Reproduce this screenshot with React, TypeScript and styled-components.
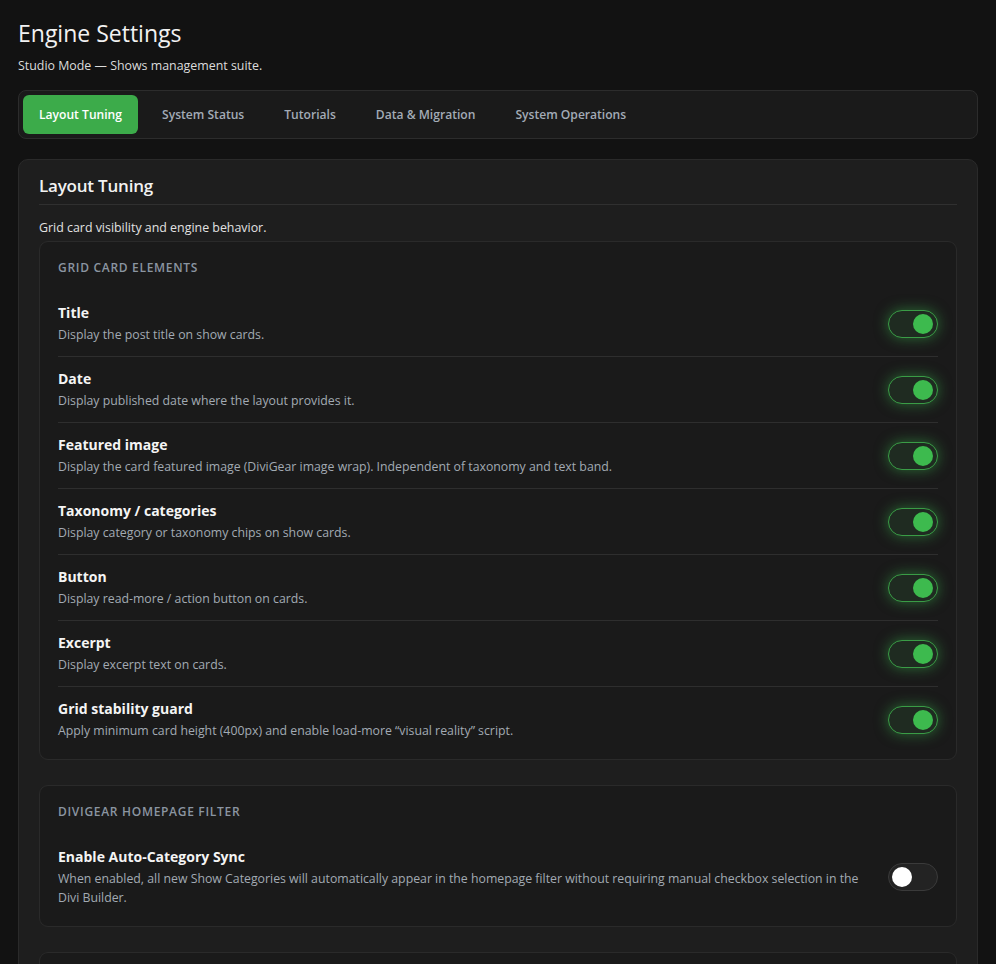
import React from "react";
import styled, { createGlobalStyle } from "styled-components";

const Global = createGlobalStyle`
  html, body { margin: 0; padding: 0; background: #121212; }
  body { font-family: "Open Sans", "Noto Sans", sans-serif; color: #e8e8e8; }
  * { box-sizing: border-box; }
`;

const Page = styled.div`
  padding: 18px 18px 0;
  min-height: 964px;
`;

const Heading = styled.h1`
  margin: 0;
  font-size: 23px;
  line-height: 30px;
  font-weight: 400;
  color: #f2f2f2;
`;

const Subtitle = styled.p`
  margin: 9px 0 15px;
  font-size: 12.4px;
  line-height: 18px;
  color: #dcdcdc;
`;

const TabBar = styled.nav`
  display: flex;
  gap: 8px;
  padding: 4px;
  background: #1a1a1a;
  border: 1px solid #2c2c2c;
  border-radius: 8px;
`;

const Tab = styled.button<{ $active?: boolean }>`
  font-family: inherit;
  font-size: 12.1px;
  font-weight: 600;
  height: 39px;
  padding: 0 16px;
  border: 0;
  border-radius: 6px;
  background: ${(p) => (p.$active ? "#3cab4a" : "transparent")};
  color: ${(p) => (p.$active ? "#ffffff" : "#a3abb6")};
  cursor: pointer;
`;

const MainCard = styled.section`
  margin-top: 20px;
  background: #1e1e1e;
  border: 1px solid #2a2a2a;
  border-radius: 10px;
  padding: 15px 20px 20px;
`;

const CardTitle = styled.h2`
  margin: 0;
  font-size: 17px;
  line-height: 22px;
  font-weight: 600;
  letter-spacing: -0.2px;
  color: #f2f2f2;
  padding-bottom: 7px;
  border-bottom: 1px solid #303030;
`;

const CardDesc = styled.p`
  margin: 14px 0 4px;
  font-size: 12.4px;
  line-height: 18px;
  color: #e2e2e2;
`;

const Section = styled.div`
  background: #1a1a1a;
  border: 1px solid #2a2a2a;
  border-radius: 9px;
  padding: 18px 18px 7px;
  & + & { margin-top: 25px; }
`;

const SectionLabel = styled.h3`
  margin: 0 0 15px;
  font-size: 12px;
  line-height: 16px;
  font-weight: 600;
  letter-spacing: 0.7px;
  text-transform: uppercase;
  color: #8b95a1;
`;

const Row = styled.div`
  display: flex;
  align-items: center;
  gap: 24px;
  padding: 12px 0 12px;
  & + & { border-top: 1px solid #2e2e2e; }
`;

const RowText = styled.div`
  flex: 1;
  min-width: 0;
`;

const RowTitle = styled.div`
  font-size: 14px;
  line-height: 20px;
  font-weight: 700;
  color: #f4f4f4;
`;

const RowDesc = styled.div`
  margin-top: 2px;
  font-size: 12.3px;
  line-height: 19px;
  color: #a2aab3;
`;

const Toggle = styled.span<{ $on?: boolean }>`
  position: relative;
  flex: 0 0 auto;
  width: 50px;
  height: 28px;
  border-radius: 14px;
  border: 1px solid ${(p) => (p.$on ? "#3a9c46" : "#3a3a3a")};
  background: ${(p) => (p.$on ? "#1f2b21" : "#232323")};
  box-shadow: ${(p) => (p.$on ? "0 0 14px rgba(60, 190, 80, 0.5)" : "none")};
  &::after {
    content: "";
    position: absolute;
    top: 3px;
    left: ${(p) => (p.$on ? "24px" : "3px")};
    width: 20px;
    height: 20px;
    border-radius: 50%;
    background: ${(p) => (p.$on ? "#3dba4e" : "#ffffff")};
  }
`;

const Peek = styled.div`
  margin-top: 25px;
  height: 40px;
  background: #1a1a1a;
  border: 1px solid #2a2a2a;
  border-bottom: 0;
  border-radius: 9px 9px 0 0;
`;

const gridItems = [
  { t: "Title", d: "Display the post title on show cards." },
  { t: "Date", d: "Display published date where the layout provides it." },
  { t: "Featured image", d: "Display the card featured image (DiviGear image wrap). Independent of taxonomy and text band." },
  { t: "Taxonomy / categories", d: "Display category or taxonomy chips on show cards." },
  { t: "Button", d: "Display read-more / action button on cards." },
  { t: "Excerpt", d: "Display excerpt text on cards." },
  { t: "Grid stability guard", d: "Apply minimum card height (400px) and enable load-more \u201Cvisual reality\u201D script." },
];

const tabs = ["Layout Tuning", "System Status", "Tutorials", "Data & Migration", "System Operations"];

export default function App() {
  return (
    <>
      <Global />
      <Page>
        <Heading>Engine Settings</Heading>
        <Subtitle>Studio Mode — Shows management suite.</Subtitle>
        <TabBar>
          {tabs.map((t, i) => (
            <Tab key={t} $active={i === 0}>{t}</Tab>
          ))}
        </TabBar>
        <MainCard>
          <CardTitle>Layout Tuning</CardTitle>
          <CardDesc>Grid card visibility and engine behavior.</CardDesc>
          <Section>
            <SectionLabel>Grid card elements</SectionLabel>
            {gridItems.map((it) => (
              <Row key={it.t}>
                <RowText>
                  <RowTitle>{it.t}</RowTitle>
                  <RowDesc>{it.d}</RowDesc>
                </RowText>
                <Toggle $on />
              </Row>
            ))}
          </Section>
          <Section>
            <SectionLabel>DiviGear homepage filter</SectionLabel>
            <Row>
              <RowText>
                <RowTitle>Enable Auto-Category Sync</RowTitle>
                <RowDesc>
                  When enabled, all new Show Categories will automatically appear in the homepage filter without requiring manual checkbox selection in the Divi Builder.
                </RowDesc>
              </RowText>
              <Toggle />
            </Row>
          </Section>
          <Peek />
        </MainCard>
      </Page>
    </>
  );
}
